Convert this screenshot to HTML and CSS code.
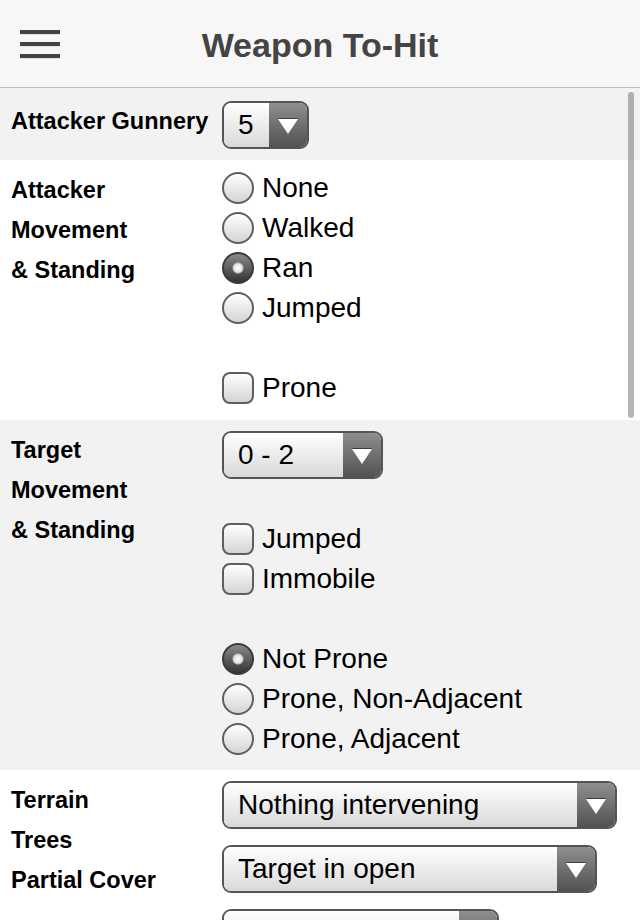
FILE: index.html
```html
<!DOCTYPE html>
<html lang="en">
  <head>
    <meta charset="UTF-8" />
    <meta name="viewport" content="width=device-width, initial-scale=1.0" />
    <title>Weapon To-Hit</title>
    <link rel="stylesheet" href="styles.css">
  </head>
  <body>
    <header class="topbar">
      <button class="menu" aria-label="Menu"><span></span><span></span><span></span></button>
      <h1>Weapon To-Hit</h1>
    </header>

    <main class="form">
      <section class="row shaded single">
        <div class="label">Attacker Gunnery</div>
        <div class="controls">
          <div class="select w-gunnery"><span class="value">5</span><span class="arrow"></span></div>
        </div>
      </section>

      <section class="row">
        <div class="label">Attacker<br />Movement<br />&amp; Standing</div>
        <div class="controls">
          <label class="option"><input type="radio" name="amove" /> None</label>
          <label class="option"><input type="radio" name="amove" /> Walked</label>
          <label class="option"><input type="radio" name="amove" checked /> Ran</label>
          <label class="option"><input type="radio" name="amove" /> Jumped</label>
          <div class="spacer"></div>
          <label class="option"><input type="checkbox" /> Prone</label>
        </div>
      </section>

      <section class="row shaded">
        <div class="label">Target<br />Movement<br />&amp; Standing</div>
        <div class="controls">
          <div class="select w-range"><span class="value">0 - 2</span><span class="arrow"></span></div>
          <div class="spacer"></div>
          <label class="option"><input type="checkbox" /> Jumped</label>
          <label class="option"><input type="checkbox" /> Immobile</label>
          <div class="spacer"></div>
          <label class="option"><input type="radio" name="tprone" checked /> Not Prone</label>
          <label class="option"><input type="radio" name="tprone" /> Prone, Non-Adjacent</label>
          <label class="option"><input type="radio" name="tprone" /> Prone, Adjacent</label>
        </div>
      </section>

      <section class="row terrain">
        <div class="label">Terrain<br />Trees<br />Partial Cover</div>
        <div class="controls stack">
          <div class="select w-terrain"><span class="value">Nothing intervening</span><span class="arrow"></span></div>
          <div class="select w-cover"><span class="value">Target in open</span><span class="arrow"></span></div>
          <div class="select w-other"><span class="value">&nbsp;</span><span class="arrow"></span></div>
        </div>
      </section>
    </main>

    <div class="scrollbar"></div>
  </body>
</html>
```

FILE: styles.css
```css
body {
  margin: 0;
  font-family: "Liberation Sans", Arial, sans-serif;
  background: #ffffff;
  color: #000;
}
.topbar {
  position: relative;
  height: 87px;
  background: #f7f7f7;
  border-bottom: 1px solid #bdbdbd;
  display: flex;
  align-items: center;
  justify-content: center;
}
.topbar h1 {
  margin: 3px 0 0;
  font-size: 34px;
  font-weight: bold;
  color: #444;
}
.menu {
  position: absolute;
  left: 20px;
  top: 30px;
  width: 40px;
  padding: 0;
  border: none;
  background: none;
  display: flex;
  flex-direction: column;
  gap: 8px;
}
.menu span {
  display: block;
  height: 4px;
  background: #444;
  box-shadow: 0 1px 0 #e2e2e2;
}
.row {
  display: grid;
  grid-template-columns: 211px 1fr;
  padding: 10px 0 10px 11px;
}
.row.shaded {
  background: #f2f2f2;
}
.row.single {
  padding: 13px 0 11px 11px;
}
.row.shaded:not(.single) {
  padding: 11px 0 11px 11px;
}
.row.terrain {
  padding-top: 11px;
}
.label {
  font-size: 23.5px;
  font-weight: bold;
  line-height: 40px;
  white-space: nowrap;
}
.row.shaded:not(.single) .label,
.row.terrain .label {
  margin-top: -1px;
}
.controls {
  display: flex;
  flex-direction: column;
  align-items: flex-start;
}
.row:not(.shaded):not(.terrain) .controls {
  margin: -2px 0 2px;
}
.controls.stack {
  gap: 16px;
}
.option {
  display: flex;
  align-items: center;
  gap: 8px;
  height: 40px;
  font-size: 28px;
}
.spacer {
  height: 40px;
}
.option input {
  appearance: none;
  -webkit-appearance: none;
  margin: 0;
  width: 32px;
  height: 32px;
  box-sizing: border-box;
  border: 2px solid #5e5e5e;
  background: linear-gradient(#ffffff, #d4d4d4);
}
.option input[type="radio"] {
  border-radius: 50%;
}
.option input[type="checkbox"] {
  border-radius: 8px;
}
.option input[type="radio"]:checked {
  border-color: #3a3a3a;
  background:
    radial-gradient(circle, #ffffff 0, #e4e4e4 4px, #bdbdbd 5px, transparent 6px),
    linear-gradient(#8a8a8a, #333333);
}
.select {
  display: flex;
  height: 48px;
  box-sizing: border-box;
  border: 2px solid #555;
  border-radius: 9px;
  overflow: hidden;
  font-size: 28px;
}
.select .value {
  flex: 1;
  display: flex;
  align-items: center;
  padding-left: 14px;
  background: linear-gradient(#ffffff, #d9d9d9);
  white-space: nowrap;
}
.select .arrow {
  width: 38px;
  display: flex;
  align-items: center;
  justify-content: center;
  background: linear-gradient(#8e8e8e, #525252);
}
.select .arrow::after {
  content: "";
  width: 0;
  height: 0;
  margin-top: 2px;
  border-left: 10px solid transparent;
  border-right: 10px solid transparent;
  border-top: 15px solid #ffffff;
  filter: drop-shadow(0 -1px 0 #3c3c3c);
}
.w-gunnery { width: 87px; }
.w-range { width: 161px; }
.w-terrain { width: 395px; }
.w-cover { width: 375px; }
.w-other { width: 277px; }
.scrollbar {
  position: absolute;
  top: 92px;
  left: 628px;
  width: 6px;
  height: 326px;
  border-radius: 3px;
  background: rgba(120, 120, 120, 0.55);
}
```
